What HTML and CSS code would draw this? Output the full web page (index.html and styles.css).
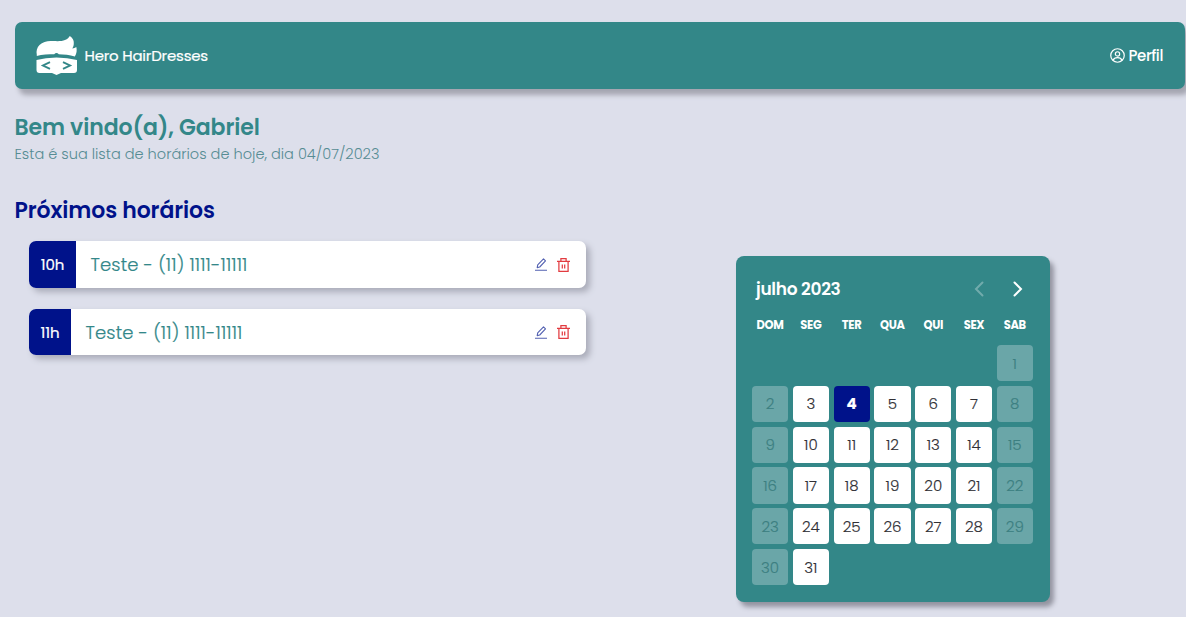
FILE: index.html
```html
<!DOCTYPE html>
<html lang="pt-BR">
<head>
<meta charset="utf-8">
<title>Hero HairDresses</title>
<link rel="stylesheet" href="styles.css">
</head>
<body>
<svg class="sprite" width="0" height="0">
  <symbol id="edit" viewBox="0 0 12 13"><path d="M0 12.300h12M2.200 9.600l.5-2.700L8.500.9l2 2-5.800 6.100z" fill="none" stroke="currentColor" stroke-width="1.1" stroke-linejoin="round"/></symbol>
  <symbol id="trash" viewBox="0 0 13 14"><path d="M0 3.400h13M3.900 3.200V.7h5.200v2.500M1.900 3.600v9.700h9.200V3.600M5.300 6.400v4.200M7.700 6.400v4.200" fill="none" stroke="currentColor" stroke-width="1.250"/></symbol>
</svg>
<header class="header">
  <div class="brand">
    <svg class="logo" viewBox="0 0 42 40">
      <path class="face" d="M.8 19C0 15 1 11.500 3.500 9 7 5.500 12 4.500 17 5c5 .3 9 .3 12-1 2.500-1 4-2.500 4.800-4 2.800 2 4.200 4 4 7 .1 2-.5 4-1.500 5.500 1.500-.2 3-.7 4-1.500.8 3 .5 6.500-1.500 9.500-5-1.500-11-2-16-2.200-1.500-1.600-3.200-1.600-4.600 0C13 18.300 6 18.500.8 20z"/>
      <path class="face" d="M.5 24q9-2.500 20-2.500T41 24V34q0 3-3 3H25L20.500 39 16 37H3.500q-3 0-3-3z"/>
      <path class="mark" d="M14 26.200l-7 3.300 7 3.300M27 26.200l7 3.300-7 3.300"/>
    </svg>
    <span class="brand-name">Hero HairDresses</span>
  </div>
  <a class="profile">
    <svg class="user" viewBox="0 0 16 16"><circle cx="8" cy="8" r="7.200"/><circle cx="8" cy="6.300" r="2.300"/><path d="M3.300 13c.7-2 2.500-2.700 4.700-2.700s4 .7 4.700 2.700"/></svg>
    <span class="profile-name">Perfil</span>
  </a>
</header>
<main>
  <h1 class="welcome">Bem vindo(a), Gabriel</h1>
  <p class="subtitle">Esta é sua lista de horários de hoje, dia 04/07/2023</p>
  <h2 class="next">Próximos horários</h2>
  <div class="content">
    <section class="list">
      <article class="card">
        <span class="hour ten">10h</span><span class="client">Teste - (11) 1111-11111</span>
        <svg class="edit"><use href="#edit"/></svg><svg class="trash"><use href="#trash"/></svg>
      </article>
      <article class="card second">
        <span class="hour eleven">11h</span><span class="client">Teste - (11) 1111-11111</span>
        <svg class="edit"><use href="#edit"/></svg><svg class="trash"><use href="#trash"/></svg>
      </article>
    </section>
    <section class="calendar">
      <div class="caption"><strong class="month">julho 2023</strong>
        <svg class="arrow off" viewBox="0 0 10 16"><path d="M8.500 1.500L2 8l6.500 6.500"/></svg>
        <svg class="arrow" viewBox="0 0 10 16"><path d="M1.500 1.500L8 8l-6.500 6.500"/></svg>
      </div>
      <div class="week"><span>DOM</span><span>SEG</span><span>TER</span><span>QUA</span><span>QUI</span><span>SEX</span><span>SAB</span></div>
      <div class="days">
        <span class="day off first">1</span>
        <span class="day off">2</span><span class="day">3</span><span class="day today">4</span><span class="day">5</span><span class="day">6</span><span class="day">7</span><span class="day off">8</span>
        <span class="day off">9</span><span class="day">10</span><span class="day">11</span><span class="day">12</span><span class="day">13</span><span class="day">14</span><span class="day off">15</span>
        <span class="day off">16</span><span class="day">17</span><span class="day">18</span><span class="day">19</span><span class="day">20</span><span class="day">21</span><span class="day off">22</span>
        <span class="day off">23</span><span class="day">24</span><span class="day">25</span><span class="day">26</span><span class="day">27</span><span class="day">28</span><span class="day off">29</span>
        <span class="day off">30</span><span class="day">31</span>
      </div>
    </section>
  </div>
</main>
</body>
</html>
```
FILE: styles.css
```css
* { box-sizing: border-box; margin: 0; }
body { padding: 22px 1px 0 14.5px; height: 617px; overflow: hidden; background: #dddfeb; font-family: Poppins, Inter, sans-serif; color: #338789; }
.sprite { display: block; height: 0; }
.header { display: flex; justify-content: space-between; align-items: center; height: 67px; padding: 0 22px 0 21px; border-radius: 7px; background: #338788; color: #fff; box-shadow: 4px 6px 5px #a5a6b1; }
.brand { display: flex; align-items: center; gap: 7px; }
.logo { width: 42px; height: 40px; }
.face { fill: #fff; }
.mark { fill: none; stroke: #338788; stroke-width: 1.9; }
.brand-name { font-size: 15px; letter-spacing: -.22px; -webkit-text-stroke: .2px #fff; }
.profile { display: flex; align-items: center; gap: 4px; }
.user { width: 15px; height: 15px; fill: none; stroke: #fff; stroke-width: 1.3; }
.profile-name { font-size: 15px; font-weight: 500; letter-spacing: -.4px; }
.welcome { margin-top: 22px; font-size: 22px; line-height: 33px; font-weight: 600; letter-spacing: -.1px; }
.subtitle { font-size: 14.55px; line-height: 20px; font-weight: 300; color: #568c93; }
.next { margin-top: 30px; font-size: 22px; line-height: 34px; font-weight: 600; letter-spacing: -.1px; color: #00128a; }
.content { display: flex; align-items: flex-start; gap: 150px; padding: 13px 0 0 14.5px; }
.list { width: 556.5px; }
.card { display: flex; align-items: center; height: 47px; padding-right: 16px; border-radius: 7px; overflow: hidden; background: #fff; box-shadow: 4px 4px 6px #aaacb9; }
.second { height: 46px; margin-top: 21px; }
.hour { display: flex; align-items: center; align-self: stretch; justify-content: center; background: #00128a; color: #fff; font-size: 15px; letter-spacing: -.15px; -webkit-text-stroke: .2px; }
.ten { width: 47px; }
.eleven { width: 42px; }
.client { flex: 1; padding-left: 14.5px; font-size: 18px; font-weight: 300; letter-spacing: .14px; white-space: nowrap; -webkit-text-stroke: .2px; }
.edit { width: 12px; height: 13px; color: #5361b1; }
.trash { width: 13px; height: 14px; margin-left: 10px; color: #e23b40; }
.calendar { width: 314px; height: 346px; margin-top: 15px; padding: 20px 15.5px 20px 16.5px; border-radius: 8px; background: #338788; color: #fff; box-shadow: 4px 5px 5px #9394a0; }
.caption { display: flex; align-items: center; height: 26px; padding: 0 11px 0 4px; }
.month { flex: 1; font-size: 17px; font-weight: 600; letter-spacing: -.3px; }
.arrow { width: 10px; height: 16px; fill: none; stroke: #fff; stroke-width: 2; stroke-linecap: round; }
.arrow.off { margin-right: 29px; opacity: .3; }
.week { display: grid; grid-template-columns: repeat(7, 36px); column-gap: 4.8px; height: 43px; padding-top: 15px; font-size: 11.5px; line-height: 16px; font-weight: 700; letter-spacing: -.35px; text-align: center; }
.days { display: grid; grid-template-columns: repeat(7, 36.2px); grid-auto-rows: 36.2px; gap: 4.6px; }
.day { display: flex; align-items: center; justify-content: center; border-radius: 4px; background: #fff; color: #303035; font-size: 15px; font-weight: 300; -webkit-text-stroke: .15px; }
.first { grid-column: 7; }
.day.off { background: #6aa6a8; color: #3c7f81; }
.day.today { background: #00128a; color: #fff; font-weight: 700; }
```
